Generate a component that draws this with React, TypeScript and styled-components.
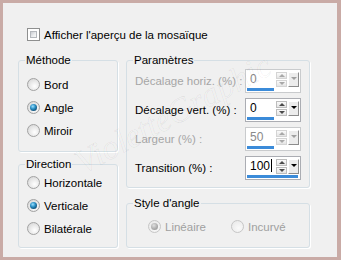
import React from 'react';
import styled, { createGlobalStyle } from 'styled-components';

const GlobalStyle = createGlobalStyle`
  body {
    margin: 0;
    font-family: "Liberation Sans", Arial, sans-serif;
    font-size: 11.5px;
  }
`;

const Frame = styled.div`
  width: 341px;
  height: 260px;
  box-sizing: border-box;
  padding: 3px 4px 3px 3px;
  background: #c9aba6;
`;

const Panel = styled.div`
  position: relative;
  height: 100%;
  box-sizing: border-box;
  padding: 25px 0 0 15px;
  background: #f0f0f0;
  overflow: hidden;
`;

const Watermark = styled.div`
  position: absolute;
  left: 62px;
  top: 92px;
  font-family: "Liberation Serif", serif;
  font-style: italic;
  font-size: 34px;
  color: transparent;
  -webkit-text-stroke: 0.6px rgba(0, 0, 0, 0.08);
  transform: rotate(-28deg);
  pointer-events: none;
  white-space: nowrap;
`;

const CheckRow = styled.label`
  display: flex;
  align-items: center;
  gap: 4px;
  height: 13px;
  margin-left: 9px;
  color: #000;
  white-space: nowrap;
`;

const CheckBox = styled.span`
  width: 13px;
  height: 13px;
  box-sizing: border-box;
  border: 1px solid #8e8f8f;
  padding: 2px;
  background: #fff;
  display: flex;

  &::after {
    content: '';
    flex: 1;
    border: 1px solid #b4b8bd;
    background: linear-gradient(135deg, #c9ccd1 0%, #eceef0 60%, #f8f8f8 100%);
  }
`;

const Columns = styled.div`
  display: flex;
  gap: 8px;
  margin-top: 12px;
`;

const Column = styled.div<{ $w: number; $gap: number }>`
  width: ${p => p.$w}px;
  display: flex;
  flex-direction: column;
  gap: ${p => p.$gap}px;
`;

const Group = styled.fieldset<{ $h: number }>`
  margin: 0;
  padding: 0 8px;
  min-width: 0;
  height: ${p => p.$h}px;
  box-sizing: border-box;
  border: 1px solid #d5dfe5;
  border-radius: 3px;
  box-shadow: 1px 1px 0 #fff;
`;

const Legend = styled.legend`
  padding: 0 1px;
  margin-left: -2px;
  line-height: 14px;
  color: #000;
`;

const RadioList = styled.div<{ $top: number }>`
  display: flex;
  flex-direction: column;
  padding-top: ${p => p.$top}px;
`;

const RadioRow = styled.label<{ $disabled?: boolean }>`
  display: flex;
  align-items: center;
  gap: 4px;
  height: 23px;
  white-space: nowrap;
  color: ${p => (p.$disabled ? '#a0a0a0' : '#000')};
`;

const RadioDot = styled.span<{ $checked?: boolean; $disabled?: boolean }>`
  width: 13px;
  height: 13px;
  box-sizing: border-box;
  border-radius: 50%;
  border: 1px solid ${p => (p.$disabled ? '#c6c6c6' : '#a2a2a2')};
  background: ${p =>
    p.$disabled
      ? 'radial-gradient(circle at 60% 65%, #fafafa 0%, #ececec 70%)'
      : 'radial-gradient(circle at 60% 65%, #ffffff 0%, #e6e6e6 55%, #cfcfcf 100%)'};
  display: flex;
  align-items: center;
  justify-content: center;

  &::after {
    content: '';
    display: ${p => (p.$checked ? 'block' : 'none')};
    width: 7px;
    height: 7px;
    border-radius: 50%;
    background: ${p =>
      p.$disabled
        ? 'radial-gradient(circle at 40% 35%, #e0e0e0 0%, #a9a9a9 60%, #8d8d8d 100%)'
        : 'radial-gradient(circle at 40% 35%, #9be0ff 0%, #2a8fc4 40%, #0f4f78 75%, #0a3550 100%)'};
  }
`;

const ParamList = styled.div`
  margin-top: -1px;
`;

const ParamRow = styled.div<{ $disabled?: boolean }>`
  display: grid;
  grid-template-columns: 1fr auto;
  align-items: center;
  height: 29px;
  white-space: nowrap;
  color: ${p => (p.$disabled ? '#a6a6a6' : '#000')};
`;

const Spinner = styled.div<{ $disabled?: boolean }>`
  width: 56px;
  height: 24px;
  box-sizing: border-box;
  border: 1px solid ${p => (p.$disabled ? '#c9cbcd' : '#abadb3')};
  background: #fff;
  display: grid;
  grid-template-columns: 29px 11px 11px;
  grid-template-rows: 15px 3px;
  column-gap: 1px;
  row-gap: 1px;
  padding: 2px 1px 1px 0;
`;

const Value = styled.div<{ $disabled?: boolean }>`
  padding-left: 4px;
  line-height: 15px;
  font-size: 12px;
  color: ${p => (p.$disabled ? '#8a8a8a' : '#000')};
  white-space: nowrap;
`;

const Caret = styled.span`
  display: inline-block;
  width: 1px;
  height: 13px;
  margin-left: 1px;
  background: #000;
  vertical-align: -2px;
`;

const Bar = styled.div<{ $span: number }>`
  grid-row: 2;
  grid-column: 1 / span ${p => p.$span};
  margin: 0 1px;
  background: #3b8bd9;
`;

const SpinStack = styled.div`
  display: flex;
  flex-direction: column;
  gap: 1px;
`;

const SpinHalf = styled.div<{ $disabled?: boolean }>`
  height: 7px;
  box-sizing: border-box;
  border: 1px solid ${p => (p.$disabled ? '#d4d4d4' : '#bdbdbd')};
  background: linear-gradient(#fafafa, #e4e4e4);
  display: flex;
  align-items: center;
  justify-content: center;
`;

const Arrow = styled.span<{ $dir: 'up' | 'down'; $color: string }>`
  width: 0;
  height: 0;
  border-left: 3px solid transparent;
  border-right: 3px solid transparent;
  ${p =>
    p.$dir === 'up'
      ? `border-bottom: 3px solid ${p.$color};`
      : `border-top: 3px solid ${p.$color};`}
`;

const DropButton = styled.div`
  height: 15px;
  box-sizing: border-box;
  border: 1px solid;
  border-color: #fff #8c8c8c #8c8c8c #fff;
  background: #ececec;
  display: flex;
  justify-content: center;
  padding-top: 4px;
`;

const StyleRow = styled.div`
  display: grid;
  grid-template-columns: 83px auto;
  margin: 5px 0 0 13px;
`;

type ParamProps = {
  label: string;
  value: string;
  disabled?: boolean;
  full?: boolean;
  caret?: boolean;
};

const Param: React.FC<ParamProps> = ({ label, value, disabled, full, caret }) => {
  const arrow = disabled ? '#a8a8a8' : '#4a4a4a';
  return (
    <ParamRow $disabled={disabled}>
      <span>{label}</span>
      <Spinner $disabled={disabled}>
        <Value $disabled={disabled}>
          {value}
          {caret && <Caret />}
        </Value>
        <SpinStack>
          <SpinHalf $disabled={disabled}>
            <Arrow $dir="up" $color={arrow} />
          </SpinHalf>
          <SpinHalf $disabled={disabled}>
            <Arrow $dir="down" $color={arrow} />
          </SpinHalf>
        </SpinStack>
        <DropButton>
          <Arrow $dir="down" $color={disabled ? '#a0a0a0' : '#000'} />
        </DropButton>
        <Bar $span={full ? 3 : 1} />
      </Spinner>
    </ParamRow>
  );
};

type RadioProps = { label: string; checked?: boolean; disabled?: boolean };

const Radio: React.FC<RadioProps> = ({ label, checked, disabled }) => (
  <RadioRow $disabled={disabled}>
    <RadioDot $checked={checked} $disabled={disabled} />
    {label}
  </RadioRow>
);

export default function App() {
  return (
    <Frame>
      <GlobalStyle />
      <Panel>
        <CheckRow>
          <CheckBox />
          Afficher l'aperçu de la mosaïque
        </CheckRow>
        <Columns>
          <Column $w={100} $gap={5}>
            <Group $h={99}>
              <Legend>Méthode</Legend>
              <RadioList $top={6}>
                <Radio label="Bord" />
                <Radio label="Angle" checked />
                <Radio label="Miroir" />
              </RadioList>
            </Group>
            <Group $h={91}>
              <Legend>Direction</Legend>
              <RadioList $top={0}>
                <Radio label="Horizontale" />
                <Radio label="Verticale" checked />
                <Radio label="Bilatérale" />
              </RadioList>
            </Group>
          </Column>
          <Column $w={184} $gap={8}>
            <Group $h={135}>
              <Legend>Paramètres</Legend>
              <ParamList>
                <Param label="Décalage horiz. (%) :" value="0" disabled />
                <Param label="Décalage vert. (%) :" value="0" />
                <Param label="Largeur (%) :" value="50" disabled />
                <Param label="Transition (%) :" value="100" full caret />
              </ParamList>
            </Group>
            <Group $h={52}>
              <Legend>Style d'angle</Legend>
              <StyleRow>
                <Radio label="Linéaire" checked disabled />
                <Radio label="Incurvé" disabled />
              </StyleRow>
            </Group>
          </Column>
        </Columns>
        <Watermark>VioletteGraphic</Watermark>
      </Panel>
    </Frame>
  );
}
